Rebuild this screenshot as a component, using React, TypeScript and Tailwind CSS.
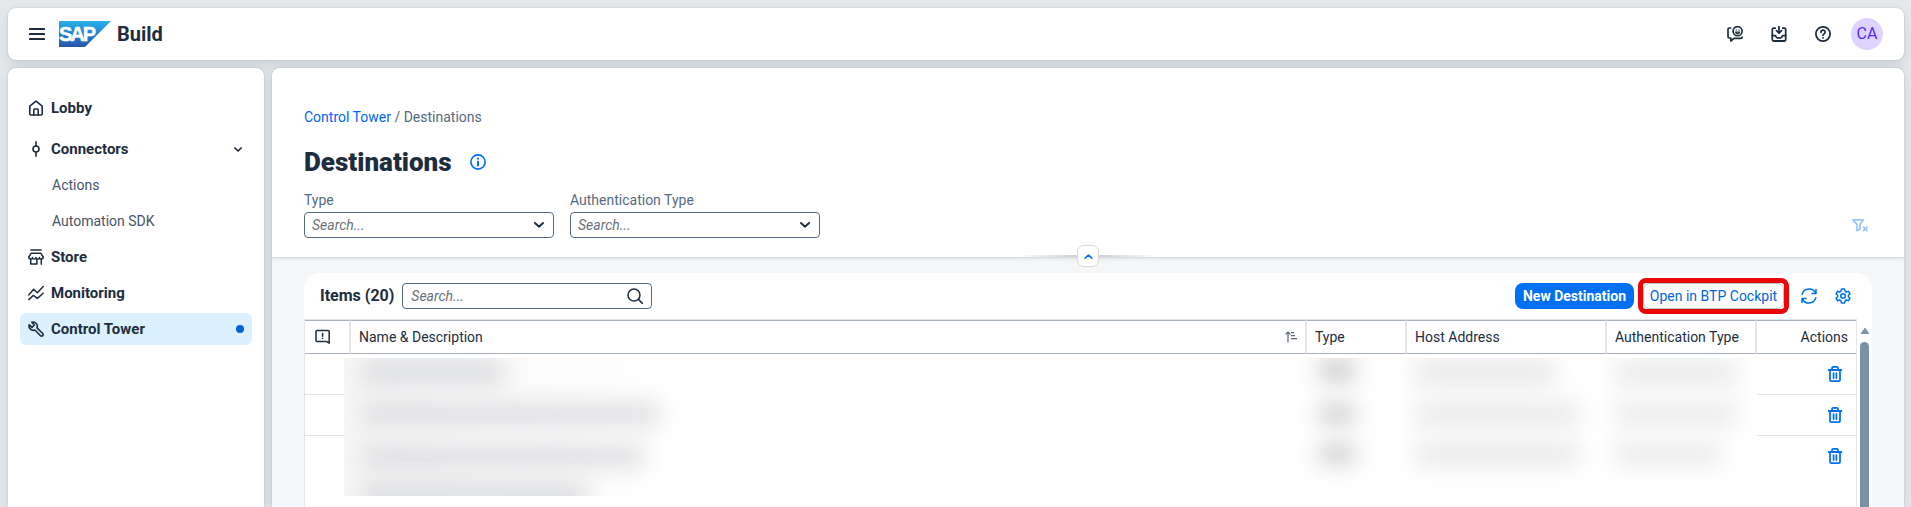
import type { ReactNode } from 'react';

function Icon({ children, className = '', width = 2 }: { children: ReactNode; className?: string; width?: number }) {
  return (
    <svg
      viewBox="0 0 16 16"
      className={`h-4 w-4 shrink-0 ${className}`}
      fill="none"
      stroke="currentColor"
      strokeWidth={width * 0.8}
      strokeLinecap="round"
      strokeLinejoin="round"
      aria-hidden="true"
    >
      {children}
    </svg>
  );
}

const MenuIcon = () => (
  <svg viewBox="0 0 16 16" className="h-4 w-4" fill="currentColor" aria-hidden="true">
    <rect x="0" y="2" width="16" height="2" rx="0.6" />
    <rect x="0" y="7" width="16" height="2" rx="0.6" />
    <rect x="0" y="12" width="16" height="2" rx="0.6" />
  </svg>
);

const HomeIcon = () => (
  <Icon>
    <path d="M1.800 6.200 8 1.200l6.200 5v7.600a1.200 1.200 0 0 1-1.200 1.200H3a1.200 1.200 0 0 1-1.200-1.200z" />
    <path d="M5.800 15V9.800a.8.8 0 0 1 .8-.8h2.800a.8.8 0 0 1 .8.8V15" />
  </Icon>
);

const ConnectorIcon = () => (
  <Icon>
    <circle cx="8" cy="8" r="3" />
    <path d="M8 .8V5M8 11v4.200" />
  </Icon>
);

const StoreIcon = () => (
  <Icon width={1.9}>
    <path d="M3 1h10M3.200 4.200h9.600L15.200 8c0 1.200-.8 2-1.900 2s-1.800-.8-1.800-1.600c0 .8-.8 1.600-1.800 1.600S8 9.200 8 8.400C8 9.200 7.300 10 6.300 10s-1.800-.8-1.800-1.600C4.500 9.200 3.800 10 2.700 10S.8 9.200.8 8z" />
    <path d="M2.700 10v5h6.200v-4.600M13.300 10v5.200" />
  </Icon>
);

const MonitoringIcon = () => (
  <Icon width={1.8}>
    <path d="M.8 10 5.600 4.200l3.800 3.600 5.800-6.400M.8 14.600l4.600-4.200 4 3 5.800-5.200" />
  </Icon>
);

const WrenchIcon = () => (
  <Icon width={2}>
    <path d="M3.800 1.200a4.300 4.300 0 0 1 5.200 5.700l5.700 5.600a1.500 1.500 0 0 1-2.200 2.200L6.900 9A4.300 4.300 0 0 1 1.200 3.800L4 6.400 6.400 4z" />
  </Icon>
);

const FeedbackIcon = () => (
  <Icon width={2.1}>
    <path d="M3.600 2H2.200A1.200 1.200 0 0 0 1 3.200v7.600A1.200 1.200 0 0 0 2.200 12h1.600v3l3.200-2.600h6.800a1.400 1.400 0 0 0 1.400-1.200" />
    <circle cx="10.600" cy="5.200" r="4.500" />
    <path d="M8.500 6a2.200 2.200 0 0 0 4.200 0zM9.200 3.900h.1M11.900 3.900h.1" strokeWidth="1.200" />
  </Icon>
);

const InboxIcon = () => (
  <Icon width={2.2}>
    <path d="M4.200 2.200H2.600a1.300 1.300 0 0 0-1.300 1.300v10a1.500 1.500 0 0 0 1.500 1.500h10.400a1.500 1.500 0 0 0 1.500-1.500v-10a1.300 1.300 0 0 0-1.300-1.300h-1.600" />
    <path d="M8 .6v6.200M5.400 4.600 8 7.200l2.600-2.600M1.400 9.600h2.800c.7 0 .9 2.200 2 2.200h3.600c1.100 0 1.300-2.200 2-2.200h2.800" />
  </Icon>
);

const HelpIcon = () => (
  <Icon width={2.2}>
    <circle cx="8" cy="8" r="7.100" />
    <path d="M5.900 6.300A2.100 2.100 0 1 1 9 8c-.7.4-1 .7-1 1.300M8 11.800v.1" />
  </Icon>
);

const InfoIcon = () => (
  <Icon width={2.1}>
    <circle cx="8" cy="8" r="7.100" />
    <path d="M8 7.800v3.800M8 4.600v.1" strokeWidth="2" />
  </Icon>
);

const ChevronIcon = ({ className = '' }: { className?: string }) => (
  <svg viewBox="0 0 10 6" className={className} fill="none" stroke="currentColor" strokeWidth="1.9" strokeLinecap="round" strokeLinejoin="round" aria-hidden="true">
    <path d="M1 1l4 3.800L9 1" />
  </svg>
);

const FilterClearIcon = () => (
  <Icon width={2.2}>
    <path d="M.9 2.800h10.600L8 7.400v4.600l-3 1.600V7.400z" />
    <path d="M11.600 10.200l3.400 3.400M15 10.200l-3.400 3.400" />
  </Icon>
);

const SearchIcon = () => (
  <Icon width={1.9}>
    <circle cx="7" cy="7" r="6" />
    <path d="M11.400 11.400l4 4" />
  </Icon>
);

const RefreshIcon = () => (
  <Icon width={1.9}>
    <path d="M1.200 6.200A7.200 7.200 0 0 1 14.800 5.400M15 1.400v4.200h-4M14.800 9.800A7.200 7.200 0 0 1 1.200 10.600M1 14.600v-4.200h4" />
  </Icon>
);

const GearIcon = () => (
  <Icon width={1.9}>
    <circle cx="8" cy="8" r="2.300" />
    <path d="M6.500 1h3l.5 2.200 1.300.8 2.200-.7 1.500 2.500L13.400 7.300v1.400L15 10.200l-1.500 2.500-2.200-.7-1.300.8L9.500 15h-3L6 12.800 4.700 12l-2.200.7L1 10.200l1.600-1.500V7.300L1 5.800l1.500-2.500 2.200.7L6 3.200z" />
  </Icon>
);

const NoteIcon = () => (
  <Icon width={1.9} className="ml-[2px]">
    <path d="M14.200 14.200V2.600A1 1 0 0 0 13.200 1.600H2A1 1 0 0 0 1 2.600v8.800a1 1 0 0 0 1 1h9.400z" />
    <path d="M7.600 4.600v2.600M7.600 9.500v.1" />
  </Icon>
);

const SortIcon = () => (
  <svg viewBox="0 0 12 12" className="h-3 w-3 shrink-0 text-[#5b6673]" fill="none" stroke="currentColor" strokeWidth="1.2" aria-hidden="true">
    <path d="M3 11.500V1.200M.6 3.400 3 1l2.400 2.400M6 1.600h3M6 4.600h4M6 7.600h6" />
  </svg>
);

const TrashIcon = () => (
  <Icon width={2.2}>
    <path d="M1.600 4h12.800M5 3.800V2A1.200 1.200 0 0 1 6.200.9h3.600A1.200 1.200 0 0 1 11 2v1.800M3 4.200v9.600A1.300 1.300 0 0 0 4.300 15.100h7.400a1.300 1.300 0 0 0 1.300-1.300V4.200M6.600 7.200v4.800M9.400 7.200v4.800" />
  </Icon>
);

function SapLogo() {
  return (
    <svg viewBox="0 0 52 26" className="h-[26px] w-[52px]" role="img" aria-label="SAP">
      <defs>
        <linearGradient id="sap" x1="0" y1="0" x2="0" y2="1">
          <stop offset="0" stopColor="#28b1e9" />
          <stop offset="0.5" stopColor="#2382cc" />
          <stop offset="1" stopColor="#2b55a6" />
        </linearGradient>
      </defs>
      <path d="M0 0h52L26 26H0z" fill="url(#sap)" />
      <text x="0" y="20" fontSize="20" fontWeight="900" fill="#fff" stroke="#fff" strokeWidth="0.5" className="font-['Liberation_Sans',sans-serif] tracking-[-2px]">
        SAP
      </text>
    </svg>
  );
}

function NavItem({ icon, label, active, trailing }: { icon: ReactNode; label: string; active?: boolean; trailing?: ReactNode }) {
  return (
    <a
      href="#"
      aria-current={active ? 'page' : undefined}
      className={`flex h-8 items-center gap-[7px] rounded-md px-2 text-[15px] font-bold ${active ? 'bg-[#dbf1ff]' : ''}`}
    >
      {icon}
      <span className="grow">{label}</span>
      {trailing}
    </a>
  );
}

function SubItem({ label }: { label: string }) {
  return (
    <a href="#" className="flex h-8 items-center pl-8 text-sm text-[#475467]">
      {label}
    </a>
  );
}

function FilterSelect({ id, label }: { id: string; label: string }) {
  return (
    <div className="flex w-[250px] flex-col gap-[2px]">
      <label htmlFor={id} className="text-sm leading-5 text-[#556b82]">
        {label}
      </label>
      <div className="relative flex">
        <select id={id} className="h-[26px] w-full appearance-none rounded border border-[#556b82] bg-white px-[7px] text-sm text-[#6a7178] italic">
          <option>Search...</option>
        </select>
        <ChevronIcon className="pointer-events-none absolute top-[10px] right-[10px] h-[6px] w-[10px] text-[#1d2d3e]" />
      </div>
    </div>
  );
}

function Smudge({ className }: { className: string }) {
  return <div className={`shrink-0 blur-[11px] ${className}`} />;
}

const cell = 'border-r-2 border-[#e4e5e7] px-2 text-left font-normal';

export default function App() {
  return (
    <div className="flex h-screen flex-col gap-2 overflow-hidden bg-[#e6e9ec] pt-2 pr-[7px] pl-2 font-[Roboto,'Liberation_Sans',sans-serif] text-[#1d2d3e]">
      <header className="flex h-[52px] shrink-0 items-center rounded-lg bg-white pr-[21px] pl-[21px] shadow-[0_0_2px_rgba(34,53,72,0.2),0_6px_14px_rgba(34,53,72,0.12)]">
        <button type="button" aria-label="Menu">
          <MenuIcon />
        </button>
        <div className="ml-[14px] flex grow items-center gap-[6px]">
          <SapLogo />
          <span className="text-xl font-bold">Build</span>
        </div>
        <div className="flex items-center gap-7">
          <button type="button" aria-label="Feedback">
            <FeedbackIcon />
          </button>
          <button type="button" aria-label="Inbox">
            <InboxIcon />
          </button>
          <button type="button" aria-label="Help">
            <HelpIcon />
          </button>
        </div>
        <button type="button" className="ml-5 h-8 w-8 rounded-full bg-[#ded3ff] text-base text-[#552cff]">
          CA
        </button>
      </header>

      <div className="flex min-h-0 grow gap-2">
        <nav className="flex w-64 shrink-0 flex-col gap-1 rounded-t-lg bg-white px-3 pt-6 shadow-[0_0_2px_rgba(34,53,72,0.2),0_4px_14px_rgba(34,53,72,0.12)]">
          <NavItem icon={<HomeIcon />} label="Lobby" />
          <div className="mt-[5px]">
            <NavItem icon={<ConnectorIcon />} label="Connectors" trailing={<ChevronIcon className="mr-[2px] h-[5px] w-2" />} />
          </div>
          <SubItem label="Actions" />
          <SubItem label="Automation SDK" />
          <NavItem icon={<StoreIcon />} label="Store" />
          <NavItem icon={<MonitoringIcon />} label="Monitoring" />
          <NavItem icon={<WrenchIcon />} label="Control Tower" active trailing={<span className="h-2 w-2 rounded-full bg-[#0064d9]" />} />
        </nav>

        <main className="flex min-w-0 grow flex-col overflow-hidden rounded-t-lg bg-[#f5f6f7] shadow-[0_0_2px_rgba(34,53,72,0.2),0_4px_14px_rgba(34,53,72,0.12)]">
          <section className="relative z-10 flex h-[190px] shrink-0 flex-col border-b border-[#d9dbde] bg-white px-8 pt-10 shadow-[0_1px_3px_rgba(34,53,72,0.1)]">
            <p className="text-sm leading-[18px] text-[#556b82]">
              <a href="#" className="text-[#0064ff]">
                Control Tower
              </a>{' '}
              / Destinations
            </p>
            <div className="mt-5 flex h-8 items-center gap-4">
              <h1 className="text-[26px] font-black">Destinations</h1>
              <button type="button" aria-label="Information" className="ml-[2px] text-[#0070f2]">
                <InfoIcon />
              </button>
            </div>
            <div className="mt-3 flex items-end gap-4">
              <FilterSelect id="type" label="Type" />
              <FilterSelect id="auth-type" label="Authentication Type" />
              <button type="button" aria-label="Clear filters" className="mr-1 mb-[5px] ml-auto text-[#99c6fa]">
                <FilterClearIcon />
              </button>
            </div>
            <div className="absolute -bottom-[10px] left-1/2 flex -translate-x-1/2 items-center">
              <span className="h-[2px] w-[60px] bg-linear-to-l from-[#d0d2d5] to-transparent" />
              <button type="button" aria-label="Collapse header" className="flex h-[22px] w-[22px] items-center justify-center rounded-[7px] border border-[#d9d9d9] bg-white">
                <ChevronIcon className="h-[5px] w-[9px] rotate-180 text-[#0070f2]" />
              </button>
              <span className="h-[2px] w-[60px] bg-linear-to-r from-[#d0d2d5] to-transparent" />
            </div>
          </section>

          <section className="mx-8 mt-[15px] flex min-h-0 grow flex-col rounded-t-2xl bg-white">
            <div className="flex h-[46px] shrink-0 items-center pr-[21px] pl-4">
              <h2 className="text-base font-bold">Items (20)</h2>
              <div className="relative ml-2 flex">
                <input
                  type="search"
                  aria-label="Search"
                  placeholder="Search..."
                  className="h-[26px] w-[250px] rounded border border-[#556b82] bg-white px-2 text-sm placeholder:text-[#6a7178] placeholder:italic"
                />
                <span className="pointer-events-none absolute top-[5px] right-[9px]">
                  <SearchIcon />
                </span>
              </div>
              <button type="button" className="ml-auto h-[26px] w-[119px] rounded-lg bg-[#0070f2] text-sm font-bold text-white">
                New Destination
              </button>
              <div className="ml-1 rounded-lg border-[5px] border-[#ea0606]">
                <button type="button" className="block h-[26px] w-[141px] rounded-md border border-[#bcc3ca] bg-white text-sm text-[#0064d9]">
                  Open in BTP Cockpit
                </button>
              </div>
              <button type="button" aria-label="Refresh" className="ml-3 text-[#0070f2]">
                <RefreshIcon />
              </button>
              <button type="button" aria-label="Settings" className="ml-[18px] text-[#0070f2]">
                <GearIcon />
              </button>
            </div>

            <div className="flex min-h-0 grow">
              <div className="relative min-w-0 grow overflow-hidden border-t border-r border-l border-[#e4e5e7]">
                <table className="w-full table-fixed border-separate border-spacing-0 text-sm">
                  <thead>
                    <tr className="h-[34px] [&>th]:border-t [&>th]:border-b [&>th]:border-t-[#a8b2bd] [&>th]:border-b-[#a8b2bd]">
                      <th aria-label="Status" className={`w-[46px] ${cell}`}>
                        <NoteIcon />
                      </th>
                      <th className={cell}>
                        <div className="flex items-center justify-between">
                          Name &amp; Description
                          <SortIcon />
                        </div>
                      </th>
                      <th className={`w-[100px] ${cell}`}>Type</th>
                      <th className={`w-[200px] ${cell}`}>Host Address</th>
                      <th className={`w-[150px] ${cell}`}>Authentication Type</th>
                      <th className="w-[99px] border-[#e4e5e7] px-2 text-right font-normal">Actions</th>
                    </tr>
                  </thead>
                  <tbody>
                    {['a', 'b', 'c'].map((row, i) => (
                      <tr key={row} className={i < 2 ? 'h-[41px] [&>td]:border-b [&>td]:border-[#e4e5e7]' : 'h-10'}>
                        <td colSpan={5} />
                        <td className="px-[13px]">
                          <button type="button" aria-label="Delete destination" className="ml-auto block text-[#0070f2]">
                            <TrashIcon />
                          </button>
                        </td>
                      </tr>
                    ))}
                  </tbody>
                </table>

                <div className="absolute top-[38px] right-[99px] left-[39px] flex h-[138px] overflow-hidden bg-white">
                  <div className="flex min-w-0 grow flex-col pl-4">
                    <div className="absolute top-0 left-0 h-full w-80 bg-linear-to-r from-[#f7f7f8] to-transparent" />
                    <Smudge className="h-7 w-[145px] bg-[#dfe0e2]" />
                    <Smudge className="mt-4 h-6 w-[300px] bg-[#dfe0e2]" />
                    <Smudge className="mt-[18px] h-6 w-[284px] bg-[#dfe0e2]" />
                    <Smudge className="mt-3 h-8 w-[228px] bg-[#dfe0e2]" />
                  </div>
                  <div className="flex w-[100px] shrink-0 flex-col pl-3">
                    <Smudge className="h-6 w-9 bg-[#cecece]" />
                    <Smudge className="mt-[22px] h-5 w-9 bg-[#cecece]" />
                    <Smudge className="mt-5 h-5 w-9 bg-[#cecece]" />
                  </div>
                  <div className="flex w-[200px] shrink-0 flex-col pl-2">
                    <Smudge className="h-7 w-[140px] bg-[#e9e9eb]" />
                    <Smudge className="mt-4 h-6 w-[164px] bg-[#e9e9eb]" />
                    <Smudge className="mt-4 h-6 w-[164px] bg-[#e9e9eb]" />
                  </div>
                  <div className="flex w-[150px] shrink-0 flex-col pl-2">
                    <Smudge className="h-7 w-[122px] bg-[#eaebec]" />
                    <Smudge className="mt-4 h-6 w-[122px] bg-[#eaebec]" />
                    <Smudge className="mt-4 h-6 w-[106px] bg-[#eaebec]" />
                  </div>
                </div>
              </div>
              <div className="flex w-[15px] shrink-0 flex-col items-center gap-2 pt-2" aria-hidden="true">
                <svg viewBox="0 0 10 7" className="h-[7px] w-[10px] shrink-0" fill="#7b91a8">
                  <path d="M5 0.500 9.600 7H.4z" />
                </svg>
                <div className="w-[9px] grow rounded-t-full bg-[#7b91a8]" />
              </div>
            </div>
          </section>
        </main>
      </div>
    </div>
  );
}
